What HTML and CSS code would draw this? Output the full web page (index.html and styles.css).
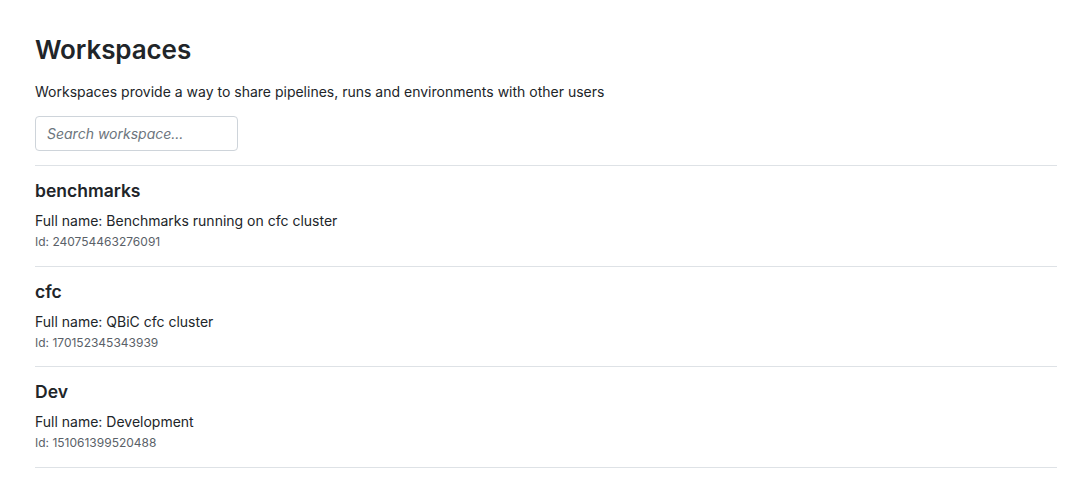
FILE: index.html
```html
<!DOCTYPE html>
<html>
<head>
<meta charset="utf-8">
<link rel="stylesheet" href="styles.css">
</head>
<body>
<main class="page">
  <h1 class="title">Workspaces</h1>
  <p class="lead">Workspaces provide a way to share pipelines, runs and environments with other users</p>
  <input class="search" type="text" placeholder="Search workspace...">
  <ul class="list">
    <li class="item">
      <h2 class="name">benchmarks</h2>
      <div class="full">Full name: Benchmarks running on cfc cluster</div>
      <div class="id">Id: 240754463276091</div>
    </li>
    <li class="item">
      <h2 class="name">cfc</h2>
      <div class="full">Full name: QBiC cfc cluster</div>
      <div class="id">Id: 170152345343939</div>
    </li>
    <li class="item">
      <h2 class="name">Dev</h2>
      <div class="full">Full name: Development</div>
      <div class="id">Id: 151061399520488</div>
    </li>
  </ul>
</main>
</body>
</html>
```

FILE: styles.css
```css
* { box-sizing: border-box; }
html, body { margin: 0; padding: 0; background: #fff; }
body {
  font-family: Inter, "Liberation Sans", sans-serif;
  color: #212529;
  font-size: 14px;
}
.page {
  padding: 30px 35px 0 35px;
}
.title {
  margin: 0;
  font-size: 26px;
  font-weight: 600;
  line-height: 40px;
  letter-spacing: -0.1px;
}
.lead {
  margin: 12px 0 0 0;
  font-size: 14px;
  line-height: 20px;
}
.search {
  display: block;
  margin-top: 14px;
  width: 203px;
  height: 35px;
  border: 1px solid #ced4da;
  border-radius: 4px;
  padding: 0 11px;
  font-family: inherit;
  font-size: 14px;
  color: #495057;
}
.search::placeholder { color: #6c757d; font-style: italic; }
.list {
  list-style: none;
  margin: 14px 0 0 0;
  padding: 0;
  border-top: 1px solid #dee2e6;
}
.item {
  border-bottom: 1px solid #dee2e6;
  padding: 13px 0 0 0;
  height: 100.67px;
}
.name {
  margin: 0;
  font-size: 17.5px;
  font-weight: 600;
  line-height: 24px;
}
.full {
  margin-top: 8px;
  line-height: 20px;
}
.id {
  margin-top: 3px;
  font-size: 12px;
  line-height: 16px;
  color: #5a6168;
}
```
